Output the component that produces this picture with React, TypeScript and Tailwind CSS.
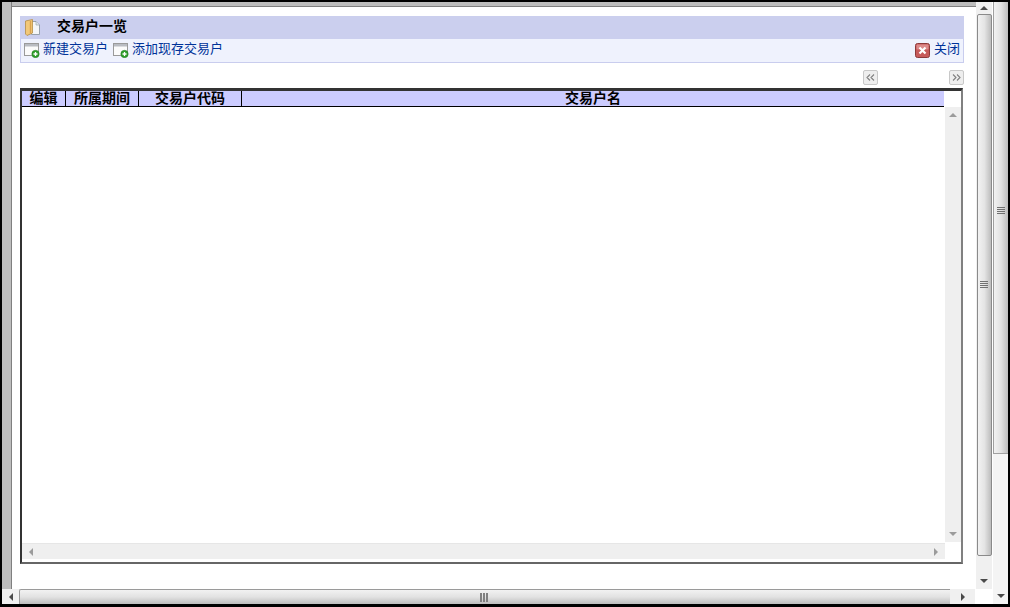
const FONT = 'font-["Liberation_Sans","Noto_Sans_CJK_SC",sans-serif]'

function Arrow({ dir }: { dir: 'up' | 'down' | 'left' | 'right' }) {
  const points = {
    up: '0,5 4,1 8,5',
    down: '0,1 8,1 4,5',
    left: '5,0 5,8 1,4',
    right: '1,0 1,8 5,4',
  }[dir]
  const wide = dir === 'up' || dir === 'down'
  return (
    <svg width={wide ? 8 : 6} height={wide ? 6 : 8} className="block">
      <polygon points={points} fill="#4a4a4a" />
    </svg>
  )
}

function SoftArrow({ dir }: { dir: 'up' | 'down' | 'left' | 'right' }) {
  return (
    <span className="opacity-50">
      <Arrow dir={dir} />
    </span>
  )
}

function FolderIcon() {
  return (
    <svg width="15" height="17" viewBox="0 0 15 17" className="block">
      <path d="M6.5 2.5 H11 L14.5 6 V15.5 H6.5 Z" fill="#f4f6f8" stroke="#8f9aa5" strokeWidth="0.9" />
      <path d="M11 2.5 V6 H14.5" fill="#dfe5ea" stroke="#8f9aa5" strokeWidth="0.6" />
      <path d="M0.5 2 L7.5 0.5 V14 L2 16.5 L0.5 15 Z" fill="#f2c878" stroke="#b58d45" strokeWidth="0.8" />
      <path d="M5.5 2 V14.5" stroke="#d9a24e" strokeWidth="1.4" />
    </svg>
  )
}

function NewIcon() {
  return (
    <svg width="16" height="15" viewBox="0 0 16 15" className="block">
      <rect x="0.5" y="0.5" width="14" height="12" fill="#fbfbfb" stroke="#9a9a9a" />
      <rect x="1" y="1" width="13" height="2.5" fill="#b9bcc2" />
      <circle cx="11.5" cy="11" r="3.7" fill="#2f9e2c" stroke="#1e7a1e" strokeWidth="0.5" />
      <path d="M9.5 11 H13.5 M11.5 9 V13" stroke="#ffffff" strokeWidth="1.3" />
    </svg>
  )
}

function CloseIcon() {
  return (
    <svg width="15" height="15" viewBox="0 0 15 15" className="block">
      <rect x="0.5" y="0.5" width="14" height="14" rx="2" fill="#c65a5a" stroke="#8c3a3a" />
      <rect x="1.5" y="1.5" width="12" height="5" rx="1" fill="#dc8a8a" />
      <path d="M4.5 4.5 L10.5 10.5 M10.5 4.5 L4.5 10.5" stroke="#ffffff" strokeWidth="2.2" />
    </svg>
  )
}

function Grip({ vertical }: { vertical?: boolean }) {
  return vertical ? (
    <div className="flex flex-col gap-px">
      <div className="w-2 h-px bg-[#707070]" />
      <div className="w-2 h-px bg-[#707070]" />
      <div className="w-2 h-px bg-[#707070]" />
      <div className="w-2 h-px bg-[#707070]" />
    </div>
  ) : (
    <div className="flex gap-px">
      <div className="w-[2px] h-[9px] bg-[#808080]" />
      <div className="w-[2px] h-[9px] bg-[#808080]" />
      <div className="w-[2px] h-[9px] bg-[#808080]" />
    </div>
  )
}

function PagerButton({ flip }: { flip?: boolean }) {
  return (
    <div className="w-[15px] h-[15px] border border-[#c8c8c8] rounded-[2px] bg-[#eeeeee] flex items-center justify-center">
      <svg width="9" height="7" viewBox="0 0 9 7" className={flip ? 'block rotate-180' : 'block'}>
        <path d="M4 0.5 L1 3.5 L4 6.5 M8 0.5 L5 3.5 L8 6.5" fill="none" stroke="#808080" strokeWidth="1.1" />
      </svg>
    </div>
  )
}

function HeaderCell({ label, className }: { label: string; className: string }) {
  return (
    <div className={`${className} h-full flex items-center justify-center border-r border-black pb-px`}>{label}</div>
  )
}

function Grid() {
  return (
    <div className="ml-2 mr-[13px] mt-[3px] h-[476px] flex flex-col border-t-[3px] border-l-2 border-r-2 border-b-2 border-t-[#333333] border-l-[#333333] border-r-[#808080] border-b-[#666666]">
      <div className="h-4 flex shrink-0">
        <div className="w-[922px] h-full flex bg-[#ccccff] border-b border-black text-[14px] font-bold leading-none text-black">
          <HeaderCell label="编辑" className="w-[44px]" />
          <HeaderCell label="所属期间" className="w-[73px]" />
          <HeaderCell label="交易户代码" className="w-[103px]" />
          <div className="flex-1 flex items-center justify-center pb-px">交易户名</div>
        </div>
      </div>
      <div className="flex-1 flex min-h-0">
        <div className="w-[923px] flex flex-col">
          <div className="flex-1" />
          <div className="h-4 bg-[#efefef] border-t border-[#e6e6e6] flex items-center justify-between px-[6px]">
            <SoftArrow dir="left" />
            <SoftArrow dir="right" />
          </div>
          <div className="h-[3px]" />
        </div>
        <div className="w-4 h-[435px] bg-[#efefef] flex flex-col items-center justify-between py-[5px]">
          <SoftArrow dir="up" />
          <SoftArrow dir="down" />
        </div>
      </div>
    </div>
  )
}

function Content() {
  return (
    <div className="flex-1 flex flex-col min-w-0 border-t border-[#808080] bg-white">
      <div className="h-[9px]" />
      <div className="ml-2 mr-3">
        <div className="h-[23px] bg-[#cbcfee] flex items-center pl-[5px]">
          <FolderIcon />
          <span className="ml-[17px] pb-1 text-[14px] font-bold leading-none text-black">交易户一览</span>
        </div>
        <div className="h-6 bg-[#eff2fd] border-l border-r border-b border-[#c9cdee] flex items-start pt-[2px] text-[13px] leading-4 text-[#003399]">
          <span className="ml-[3px] mt-[2px]"><NewIcon /></span>
          <span className="ml-[3px]">新建交易户</span>
          <span className="ml-[5px] mt-[2px]"><NewIcon /></span>
          <span className="ml-[3px]">添加现存交易户</span>
          <span className="ml-auto mt-[2px]"><CloseIcon /></span>
          <span className="ml-1 mr-[3px]">关闭</span>
        </div>
      </div>
      <div className="ml-2 mr-3 mt-[7px] h-[15px] flex justify-between pl-[843px]">
        <PagerButton />
        <PagerButton flip />
      </div>
      <Grid />
    </div>
  )
}

function PageScrollY() {
  return (
    <div className="w-[17px] bg-[#f0f0f0] flex flex-col items-center border-r border-white">
      <div className="h-3 flex items-center justify-center"><Arrow dir="up" /></div>
      <div className="w-[15px] h-[542px] border border-[#8a8a8a] rounded-[2px] bg-gradient-to-r from-[#f2f2f2] via-[#e4e4e4] to-[#bdbdbd] flex items-center justify-center pb-[2px]">
        <Grip vertical />
      </div>
      <div className="flex-1 flex items-end pb-[5px]"><Arrow dir="down" /></div>
    </div>
  )
}

function WindowScrollY() {
  return (
    <div className="w-[15px] bg-[#f4f4f4] flex flex-col items-center">
      <div className="w-full h-[452px] bg-gradient-to-r from-[#f2f2f2] via-[#e2e2e2] to-[#bdbdbd] border-l border-b border-[#a0a0a0] flex items-center justify-center pb-[34px]">
        <Grip vertical />
      </div>
      <div className="flex-1 flex items-end pb-[5px]"><Arrow dir="down" /></div>
    </div>
  )
}

function PageScrollX() {
  return (
    <div className="h-[15px] flex items-center bg-white">
      <div className="w-[17px] h-full bg-[#f0f0f0] flex items-center justify-center"><Arrow dir="left" /></div>
      <div className="w-[931px] h-full border-t border-l border-[#9a9a9a] rounded-tl-[2px] bg-gradient-to-b from-[#f2f2f2] via-[#e2e2e2] to-[#bdbdbd] flex items-center justify-center pr-[2px]">
        <Grip />
      </div>
      <div className="w-[25px] h-full bg-[#f0f0f0] flex items-center justify-center"><Arrow dir="right" /></div>
    </div>
  )
}

export default function App() {
  return (
    <div className={`${FONT} w-[1010px] h-[607px] bg-black pt-[2px] pl-[2px] pr-[2px] pb-[3px] flex overflow-hidden`}>
      <div className="w-[991px] flex flex-col">
        <div className="h-[587px] flex bg-[#bdbdbd]">
          <div className="w-[10px] border-r border-[#808080]" />
          <div className="flex-1 flex flex-col pt-1 min-w-0">
            <Content />
          </div>
          <PageScrollY />
        </div>
        <PageScrollX />
      </div>
      <WindowScrollY />
    </div>
  )
}
